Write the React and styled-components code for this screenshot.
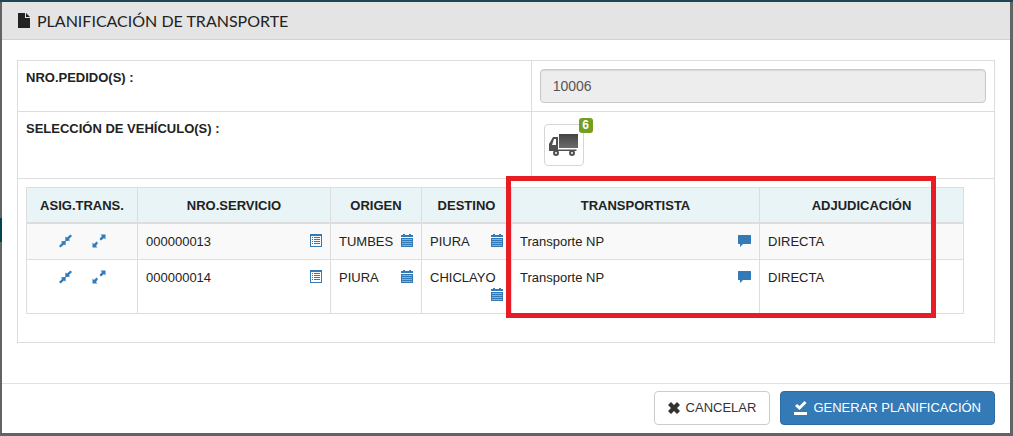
import React from "react";
import styled, { createGlobalStyle } from "styled-components";

const GlobalStyle = createGlobalStyle`
  *, *::before, *::after { box-sizing: border-box; }
  html { min-height: 100%; background: #626463; }
  body {
    margin: 0;
    color: #222;
    font: 13px/18px "Liberation Sans", Arial, sans-serif;
  }
`;

const Backdrop = styled.div`
  padding: 2px 3px 3px 2px;
  background:
    linear-gradient(#1d4753, #1d4753) 0 0 / 100% 2px no-repeat,
    linear-gradient(#06434e, #06434e) 0 218px / 2px 24px no-repeat,
    #626463;
`;

const Dialog = styled.section`
  background: #fff;
`;

const DialogHeader = styled.header`
  display: flex;
  align-items: center;
  gap: 7px;
  height: 38px;
  padding: 0 16px;
  background: #e4e4e4;
  border-bottom: 1px solid #d2d2d2;
`;

const Title = styled.h1`
  margin: 0;
  font: 400 16px/24px Lato, "Open Sans", sans-serif;
  color: #222;
`;

const DialogBody = styled.div`
  padding: 20px 15px 40px;
`;

const Form = styled.div`
  border: 1px solid #ddd;
`;

const FormRow = styled.div`
  display: grid;
  grid-template-columns: 10fr 9fr;
  border-bottom: 1px solid #ddd;
`;

const LabelCell = styled.div`
  padding: 8px;
  border-right: 1px solid #ddd;
  font-weight: 700;
`;

const FieldCell = styled.div`
  padding: ${(p) => (p.$loose ? "12px" : "8px")};
`;

const ReadOnlyInput = styled.input`
  display: block;
  width: 100%;
  height: 34px;
  padding: 6px 12px;
  border: 1px solid #c8c8c8;
  border-radius: 4px;
  background: #ededed;
  box-shadow: inset 0 1px 1px rgba(0, 0, 0, 0.08);
  color: #555;
  font: 14px/20px "Liberation Sans", Arial, sans-serif;
`;

const VehicleButton = styled.button`
  position: relative;
  display: flex;
  align-items: center;
  justify-content: center;
  width: 40px;
  height: 42px;
  padding: 0;
  border: 1px solid #d6d6d6;
  border-radius: 4px;
  background: #fff;
`;

const Badge = styled.span`
  position: absolute;
  top: -7px;
  right: -10px;
  width: 14px;
  border-radius: 3px;
  background: #739e1e;
  color: #fff;
  font: 700 12px/15px "Liberation Sans", Arial, sans-serif;
  text-align: center;
`;

const ServicesArea = styled.div`
  padding: 8px 30px 28px 8px;
`;

const TableWrap = styled.div`
  position: relative;
`;

const Highlight = styled.div`
  position: absolute;
  top: -11px;
  bottom: -4px;
  left: 480px;
  right: 28px;
  border: 5px solid #e81c24;
  pointer-events: none;
`;

const Table = styled.table`
  width: 100%;
  table-layout: fixed;
  border-collapse: separate;
  border-spacing: 0;
  border-top: 1px solid #ddd;
  border-left: 1px solid #ddd;
`;

const Th = styled.th`
  padding: 9px 0 7px;
  border-right: 1px solid #ddd;
  border-bottom: 2px solid #ddd;
  background: #e8f4f6;
  font-weight: 700;
  text-align: center;
`;

const Tr = styled.tr`
  &:nth-child(odd) { background: #f9f9f9; }
`;

const Td = styled.td`
  padding: 9px 8px 8px;
  border-right: 1px solid #ddd;
  border-bottom: 1px solid #ddd;
  vertical-align: top;
`;

const Actions = styled.div`
  display: flex;
  justify-content: center;
  gap: 20px;
`;

const IconButton = styled.button`
  display: block;
  float: ${(p) => (p.$end ? "right" : "none")};
  height: 18px;
  padding: 1px 0 3px;
  border: 0;
  background: none;
  color: #337ab7;
  svg { display: block; }
`;

const DialogFooter = styled.footer`
  display: flex;
  justify-content: flex-end;
  gap: 10px;
  padding: 7px 15px 8px;
  border-top: 1px solid #e2e2e2;
`;

const Button = styled.button`
  display: flex;
  align-items: center;
  gap: 6px;
  height: 34px;
  padding: 0 13px;
  border: 1px solid ${(p) => (p.$primary ? "#2e6da4" : "#ccc")};
  border-radius: 4px;
  background: ${(p) => (p.$primary ? "#337ab7" : "#fff")};
  color: ${(p) => (p.$primary ? "#fff" : "#333")};
  font: 13px/20px "Liberation Sans", Arial, sans-serif;
  white-space: nowrap;
`;

const FileIcon = () => (
  <svg width="12" height="15" viewBox="0 0 12 15" fill="#222" aria-hidden="true">
    <path d="M0 0h7v5h5v10H0zM8 0l4 4H8z" />
  </svg>
);

const InwardIcon = () => (
  <svg width="13" height="14" viewBox="0 0 13 14" fill="currentColor" aria-hidden="true">
    <path d="M11.500 .5 13 2 10 5 11 6.500 6.200 7.200 6.500 2.500 8 3.500zM1.500 13.500 0 12 3 9 2 7.500 6.800 6.800 6.500 11.500 5 10.500z" />
  </svg>
);

const OutwardIcon = () => (
  <svg width="14" height="14" viewBox="0 0 14 14" fill="currentColor" aria-hidden="true">
    <path d="M8.500 .5h5v5L12 4 9 6.500 7.500 5 10 2zM5.500 13.500h-5v-5L2 10 4.500 7.500 6 9 4 12z" />
  </svg>
);

const ListIcon = () => (
  <svg width="12" height="14" viewBox="0 0 12 14" fill="currentColor" aria-hidden="true">
    <path fillRule="evenodd" d="M0 0h12v13H0zM1 2v10h10V2z" />
    <path d="M2 3h1v1H2zM4 3h6v1H4zM2 5h1v1H2zM4 5h6v1H4zM2 7h1v1H2zM4 7h6v1H4zM2 9h1v1H2zM4 9h6v1H4z" />
  </svg>
);

const CalendarIcon = () => (
  <svg width="12" height="14" viewBox="0 0 12 14" fill="currentColor" aria-hidden="true">
    <path d="M2 0h2v1h4V0h2v1h2v2H0V1h2z" />
    <path fillOpacity=".6" d="M0 4h12v9H0z" />
    <path fillRule="evenodd" d="M0 4h12v9H0zM1 5v1h10V5zM1 7v1h10V7zM1 9v1h10V9zM1 11v1h10v-1z" />
  </svg>
);

const CommentIcon = () => (
  <svg width="13" height="14" viewBox="0 0 13 14" fill="currentColor" aria-hidden="true">
    <path d="M.5 1h12l.5.5v8l-.5.5H5l-3 3v-3H.5L0 9.500v-8z" />
  </svg>
);

const TruckIcon = () => (
  <svg width="30" height="24" viewBox="0 0 30 24" aria-hidden="true">
    <defs>
      <linearGradient id="cargo" x1="0" y1="0" x2="0" y2="1">
        <stop offset="0" stopColor="#444" />
        <stop offset="1" stopColor="#6b6b6b" />
      </linearGradient>
    </defs>
    <path fill="url(#cargo)" d="M10 1h19v14H10z" />
    <path fill="#505050" fillRule="evenodd" d="M4 4h5v12.500h18.500V18H0v-7zM5 6l-2 6h4V6z" />
    <g fill="#fff" stroke="#505050" strokeWidth="2">
      <circle cx="7" cy="20" r="2" />
      <circle cx="23" cy="20" r="2" />
    </g>
  </svg>
);

const CrossIcon = () => (
  <svg width="12" height="12" viewBox="0 0 12 12" fill="currentColor" aria-hidden="true">
    <path d="M3 0l3 3 3-3 3 3-3 3 3 3-3 3-3-3-3 3-3-3 3-3-3-3z" />
  </svg>
);

const SaveIcon = () => (
  <svg width="13" height="14" viewBox="0 0 13 14" fill="currentColor" aria-hidden="true">
    <path d="M10.500 0 12.500 2 5.500 9 1 5 3 3l2.500 2zM0 11h13v3H0z" />
  </svg>
);

const columns = [
  { name: "ASIG.TRANS.", width: 111 },
  { name: "NRO.SERVICIO", width: 193 },
  { name: "ORIGEN", width: 91 },
  { name: "DESTINO", width: 90 },
  { name: "TRANSPORTISTA", width: 248 },
  { name: "ADJUDICACIÓN" },
];

const services = [
  { id: "000000013", from: "TUMBES", to: "PIURA", carrier: "Transporte NP", award: "DIRECTA" },
  { id: "000000014", from: "PIURA", to: "CHICLAYO", carrier: "Transporte NP", award: "DIRECTA" },
];

const CellWithAction = ({ text, label, icon }) => (
  <Td>
    {text}
    <IconButton type="button" $end aria-label={label}>{icon}</IconButton>
  </Td>
);

export default function App() {
  return (
    <>
      <GlobalStyle />
      <Backdrop>
        <Dialog role="dialog" aria-labelledby="dialog-title">
          <DialogHeader>
            <FileIcon />
            <Title id="dialog-title">PLANIFICACIÓN DE TRANSPORTE</Title>
          </DialogHeader>
          <DialogBody>
            <Form>
              <FormRow>
                <LabelCell><label htmlFor="orders">NRO.PEDIDO(S) :</label></LabelCell>
                <FieldCell><ReadOnlyInput id="orders" type="text" value="10006" readOnly /></FieldCell>
              </FormRow>
              <FormRow>
                <LabelCell><label htmlFor="vehicles">SELECCIÓN DE VEHÍCULO(S) :</label></LabelCell>
                <FieldCell $loose>
                  <VehicleButton id="vehicles" type="button">
                    <TruckIcon />
                    <Badge>6</Badge>
                  </VehicleButton>
                </FieldCell>
              </FormRow>
              <ServicesArea>
                <TableWrap>
                  <Table>
                    <colgroup>
                      {columns.map((c) => <col key={c.name} width={c.width} />)}
                    </colgroup>
                    <thead>
                      <tr>{columns.map((c) => <Th key={c.name} scope="col">{c.name}</Th>)}</tr>
                    </thead>
                    <tbody>
                      {services.map((s) => (
                        <Tr key={s.id}>
                          <Td>
                            <Actions>
                              <IconButton type="button" aria-label="Asignar"><InwardIcon /></IconButton>
                              <IconButton type="button" aria-label="Separar"><OutwardIcon /></IconButton>
                            </Actions>
                          </Td>
                          <CellWithAction text={s.id} label="Detalle" icon={<ListIcon />} />
                          <CellWithAction text={s.from} label="Fecha de origen" icon={<CalendarIcon />} />
                          <CellWithAction text={s.to} label="Fecha de destino" icon={<CalendarIcon />} />
                          <CellWithAction text={s.carrier} label="Comentario" icon={<CommentIcon />} />
                          <Td>{s.award}</Td>
                        </Tr>
                      ))}
                    </tbody>
                  </Table>
                  <Highlight />
                </TableWrap>
              </ServicesArea>
            </Form>
          </DialogBody>
          <DialogFooter>
            <Button type="button"><CrossIcon />CANCELAR</Button>
            <Button type="button" $primary><SaveIcon />GENERAR PLANIFICACIÓN</Button>
          </DialogFooter>
        </Dialog>
      </Backdrop>
    </>
  );
}
